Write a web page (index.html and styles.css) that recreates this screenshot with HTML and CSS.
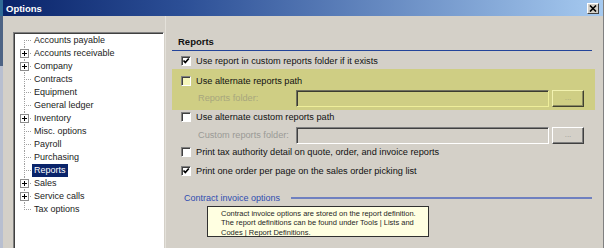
FILE: index.html
```html
<!DOCTYPE html>
<html lang="en">
<head>
    <meta charset="UTF-8">
    <title>Options</title>
    <link rel="stylesheet" href="styles.css">
</head>
<body>
    <div class="screen">
        <div class="desk"></div>
        <div class="window">
            <div class="titlebar">
                <span class="title">Options</span>
                <span class="close">
                    <svg width="8" height="7" viewBox="0 0 8 7"><path d="M1 0.5 L7 6.5 M7 0.5 L1 6.5" stroke="#000" stroke-width="1.6" fill="none"/></svg>
                </span>
            </div>
            <div class="body">
                <div class="tree">
                    <ul>
                        <li class="first"><span class="twig"></span><span class="label">Accounts payable</span></li>
                        <li><span class="twig"><span class="plus"></span></span><span class="label">Accounts receivable</span></li>
                        <li><span class="twig"><span class="plus"></span></span><span class="label">Company</span></li>
                        <li><span class="twig"></span><span class="label">Contracts</span></li>
                        <li><span class="twig"></span><span class="label">Equipment</span></li>
                        <li><span class="twig"></span><span class="label">General ledger</span></li>
                        <li><span class="twig"><span class="plus"></span></span><span class="label">Inventory</span></li>
                        <li><span class="twig"></span><span class="label">Misc. options</span></li>
                        <li><span class="twig"></span><span class="label">Payroll</span></li>
                        <li><span class="twig"></span><span class="label">Purchasing</span></li>
                        <li><span class="twig"></span><span class="label selected">Reports</span></li>
                        <li><span class="twig"><span class="plus"></span></span><span class="label">Sales</span></li>
                        <li><span class="twig"><span class="plus"></span></span><span class="label">Service calls</span></li>
                        <li class="last"><span class="twig"></span><span class="label">Tax options</span></li>
                    </ul>
                </div>
                <div class="panel">
                    <div class="heading">Reports</div>

                    <div class="check-row row1">
                        <span class="box checked"></span>Use report in custom reports folder if it exists
                    </div>

                    <div class="highlight">
                        <div class="check-row">
                            <span class="box"></span>Use alternate reports path
                        </div>
                        <div class="field-row">
                            <span class="field-label">Reports folder:</span>
                            <span class="input"></span>
                            <span class="browse">...</span>
                        </div>
                    </div>

                    <div class="check-row row3">
                        <span class="box"></span>Use alternate custom reports path
                    </div>
                    <div class="field-row field2">
                        <span class="field-label">Custom reports folder:</span>
                        <span class="input"></span>
                        <span class="browse">...</span>
                    </div>

                    <div class="check-row">
                        <span class="box"></span>Print tax authority detail on quote, order, and invoice reports
                    </div>
                    <div class="check-row row5">
                        <span class="box checked"></span>Print one order per page on the sales order picking list
                    </div>

                    <div class="group">
                        <span class="group-title">Contract invoice options</span>
                        <span class="rule"></span>
                    </div>
                    <div class="note">
                        Contract invoice options are stored on the report definition.<br>
                        The report definitions can be found under Tools | Lists and<br>
                        Codes | Report Definitions.
                    </div>
                </div>
            </div>
        </div>
    </div>
</body>
</html>
```

FILE: styles.css
```css
html, body{
    margin: 0;
    padding: 0;
    width: 604px;
    height: 248px;
    overflow: hidden;
}
body{
    font-family: "Liberation Sans", Arial, sans-serif;
    font-size: 9.2px;
    color: #111;
}
.screen{
    display: flex;
    height: 248px;
}
.desk{
    width: 3px;
    flex: none;
    background: linear-gradient(to bottom, #2f6a96 0, #2f6a96 16px, #4d6384 16px, #4d6384 66px, #b8bfd0 66px);
}
.window{
    flex: 1;
    display: flex;
    flex-direction: column;
    background: #d4d0c8;
    border-right: 1px solid #808080;
}
.titlebar{
    height: 16px;
    flex: none;
    display: flex;
    align-items: center;
    justify-content: space-between;
    padding: 0 3px 0 3px;
    background: linear-gradient(to right, #0a246a, #2c4f96 30%, #a6caf0);
}
.title{
    color: #fff;
    font-weight: bold;
    font-size: 9.5px;
}
.close{
    width: 10px;
    height: 9px;
    display: flex;
    align-items: center;
    justify-content: center;
    background: #d4d0c8;
    border: 1px solid;
    border-color: #fff #404040 #404040 #fff;
    margin-right: 1px;
}
.body{
    flex: 1;
    display: flex;
    overflow: hidden;
}

/* tree */
.tree{
    width: 149px;
    height: 240px;
    flex: none;
    margin: 16px 0 0 10px;
    background: #fff;
    border: 1px solid;
    border-color: #808080 #fff #fff #808080;
    box-shadow: inset 1px 1px #404040;
}
.tree ul{
    list-style: none;
    margin: 0;
    padding: 1px 0 0 6px;
}
.tree li{
    display: flex;
    height: 13px;
    align-items: center;
}
.twig{
    width: 12px;
    height: 13px;
    flex: none;
    position: relative;
    background:
        repeating-linear-gradient(to bottom, #a0a0a0 0, #a0a0a0 1px, transparent 1px, transparent 2px) 4px 0 / 1px 100% no-repeat,
        repeating-linear-gradient(to right, #a0a0a0 0, #a0a0a0 1px, transparent 1px, transparent 2px) 4px 6px / 8px 1px no-repeat;
}
.first .twig{
    background:
        repeating-linear-gradient(to bottom, #a0a0a0 0, #a0a0a0 1px, transparent 1px, transparent 2px) 4px 6px / 1px 7px no-repeat,
        repeating-linear-gradient(to right, #a0a0a0 0, #a0a0a0 1px, transparent 1px, transparent 2px) 4px 6px / 8px 1px no-repeat;
}
.last .twig{
    background:
        repeating-linear-gradient(to bottom, #a0a0a0 0, #a0a0a0 1px, transparent 1px, transparent 2px) 4px 0 / 1px 7px no-repeat,
        repeating-linear-gradient(to right, #a0a0a0 0, #a0a0a0 1px, transparent 1px, transparent 2px) 4px 6px / 8px 1px no-repeat;
}
.plus{
    position: absolute;
    left: 0;
    top: 2px;
    width: 7px;
    height: 7px;
    border: 1px solid #8c8c8c;
    background:
        linear-gradient(#000, #000) 1px 3px / 5px 1px no-repeat,
        linear-gradient(#000, #000) 3px 1px / 1px 5px no-repeat,
        #fff;
}
.label{
    padding: 0 2px;
    line-height: 13px;
    white-space: nowrap;
    font-size: 9px;
    color: #222;
}
.label.selected{
    background: #0a246a;
    color: #fff;
}

/* options panel */
.panel{
    flex: 1;
    margin-left: 1px;
    padding-top: 16px;
    border-left: 1px solid #e4e1da;
}
.heading{
    height: 19px;
    margin: 0 11px 0 6px;
    padding-left: 6px;
    box-sizing: border-box;
    line-height: 19px;
    font-weight: bold;
    font-size: 9.5px;
    border-bottom: 1px solid #23449a;
}
.check-row{
    display: flex;
    align-items: center;
    height: 16px;
    padding-left: 15px;
    white-space: nowrap;
}
.row1{
    margin-top: 2px;
}
.row3{
    height: 13px;
}
.row5{
    margin-top: 2px;
    height: 18px;
}
.box{
    width: 8px;
    height: 8px;
    flex: none;
    margin-right: 5px;
    background: #fff;
    border: 1px solid;
    border-color: #808080 #fff #fff #808080;
    box-shadow: inset 1px 1px #404040;
}
.box.checked{
    background:
        url("data:image/svg+xml;utf8,<svg xmlns='http://www.w3.org/2000/svg' width='8' height='8'><path d='M1.5 3.5 L3.3 5.5 L6.8 1.5' stroke='black' stroke-width='1.7' fill='none'/></svg>") center / 8px 8px no-repeat,
        #fff;
}
.field-row{
    display: flex;
    align-items: center;
    height: 18px;
    padding-left: 32px;
}
.field2{
    margin-top: 3px;
}
.field-label{
    width: 98px;
    flex: none;
    color: #9a9a96;
}
.input{
    width: 251px;
    height: 15px;
    flex: none;
    border: 1px solid;
    border-color: #808080 #fff #fff #808080;
    box-shadow: inset 1px 1px #404040;
}
.browse{
    width: 30px;
    height: 15px;
    flex: none;
    margin-left: 3px;
    border: 1px solid;
    border-color: #fff #404040 #404040 #fff;
    box-shadow: inset -1px -1px #808080;
    color: #9a9a96;
    font-size: 8px;
    line-height: 13px;
    text-align: center;
}
.highlight{
    margin: 0 8px 0 6px;
    padding: 4px 0 3px;
    background: #cfce84;
}
.highlight .check-row{
    padding-left: 9px;
}
.highlight .field-row{
    padding-left: 26px;
}
.highlight .box{
    background: #f6f6bc;
}
.highlight .field-label{
    color: #a7a67e;
}
.highlight .input{
    border-color: #707060 #eeee9a #eeee9a #707060;
    box-shadow: inset 1px 1px #3c3c30;
}
.highlight .browse{
    border-color: #f2f2b0 #404030 #404030 #f2f2b0;
    box-shadow: inset -1px -1px #8a8a60;
    color: #a7a67e;
}
.group{
    display: flex;
    align-items: center;
    height: 16px;
    margin: 10px 11px 0 18px;
}
.group-title{
    color: #2f4cb0;
    white-space: nowrap;
    font-size: 9px;
}
.rule{
    flex: 1;
    height: 2px;
    margin-left: 11px;
    background: #6f80c0;
}
.note{
    width: 207px;
    height: 27px;
    margin-left: 41px;
    padding: 2px 0 0 13px;
    background: #ffffe1;
    border: 1px solid #303030;
    font-size: 7.5px;
    line-height: 9.4px;
    color: #1e1e1e;
    white-space: nowrap;
}
```
